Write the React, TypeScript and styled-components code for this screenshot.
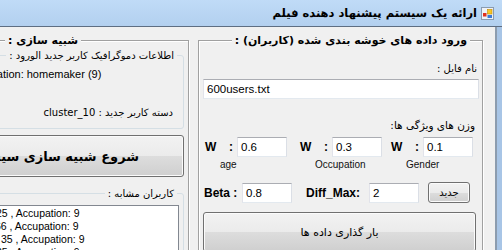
import React, { FC } from 'react';
import styled, { createGlobalStyle } from 'styled-components';

const fa = `"DejaVu Sans", "Liberation Sans", sans-serif`;

const GlobalStyle = createGlobalStyle`
	html, body { margin: 0; padding: 0; background: #f0f0f0; overflow: hidden; }
	body { font-family: "Liberation Sans", Arial, sans-serif; color: #000; }
`;

const Window = styled.div`
	width: 502px;
	height: 250px;
	overflow: hidden;
	display: flex;
	flex-direction: column;
	background: #f0f0f0;
`;

const TitleBar = styled.div`
	flex: 0 0 26px;
	display: flex;
	align-items: center;
	direction: rtl;
	gap: 4px;
	padding-right: 8px;
	background: linear-gradient(#c0dbf7, #b3d0ef);
	border-bottom: 1px solid #5e6e82;
`;

const Title = styled.span`
	font-family: ${fa};
	font-size: 11.5px;
	font-weight: bold;
`;

const Body = styled.div`
	flex: 1;
	display: flex;
	direction: rtl;
	min-height: 0;
`;

const FrameEdge = styled.div`
	flex: 0 0 7px;
	box-sizing: border-box;
	background: #a8c5e6;
	border-left: 2px solid #8c9cae;
`;

const Client = styled.div`
	flex: 1;
	display: flex;
	direction: rtl;
	align-items: flex-start;
	gap: 9px;
	padding: 13px 12px 0 0;
	overflow: hidden;
`;

const Group = styled.div<{ $w: number }>`
	position: relative;
	flex: 0 0 ${p => p.$w}px;
	height: 240px;
	box-sizing: border-box;
	border: 1px solid #a0a0a0;
	box-shadow: inset 1px 1px 0 #fff, 1px 1px 0 #fff;
	display: flex;
	flex-direction: column;
`;

const Legend = styled.span<{ $right: number; $bold?: boolean }>`
	position: absolute;
	top: -7px;
	right: ${p => p.$right}px;
	padding: 0 3px;
	background: #f0f0f0;
	font-family: ${fa};
	font-size: ${p => (p.$bold ? 11 : 10)}px;
	font-weight: ${p => (p.$bold ? 'bold' : 'normal')};
	line-height: 13px;
	white-space: nowrap;
	direction: rtl;
`;

const SubGroup = styled.div<{ $top: number; $h?: number }>`
	position: relative;
	margin: ${p => p.$top}px 4px 0 4px;
	${p => (p.$h ? `height: ${p.$h}px;` : 'flex: 1;')}
	border: 1px solid #d5dfe5;
	border-radius: 3px;
	display: flex;
	flex-direction: column;
`;

const FaLabel = styled.div<{ $top: number; $pr: number; $size?: number }>`
	margin-top: ${p => p.$top}px;
	padding-right: ${p => p.$pr}px;
	font-family: ${fa};
	font-size: ${p => p.$size ?? 10}px;
	line-height: 13px;
	direction: rtl;
	text-align: right;
	white-space: nowrap;
`;

const InfoLine = styled.div`
	margin-top: 12px;
	direction: ltr;
	text-align: left;
	font-size: 11px;
	line-height: 13px;
	white-space: nowrap;
`;

const TextBox = styled.div<{ $w?: number }>`
	box-sizing: border-box;
	height: 20px;
	${p => (p.$w ? `width: ${p.$w}px;` : '')}
	background: #fff;
	border: 1px solid;
	border-color: #abadb3 #dbdfe6 #e3e9ef #e2e3ea;
	padding: 0 3px;
	font-size: 11.5px;
	line-height: 18px;
	direction: ltr;
	text-align: left;
	white-space: nowrap;
`;

const FileBox = styled(TextBox)`
	margin: 4px 3px 0 4px;
`;

const WinButton = styled.div`
	box-sizing: border-box;
	display: flex;
	align-items: center;
	justify-content: center;
	border: 1px solid #707070;
	border-radius: 3px;
	background: linear-gradient(#f2f2f2 0%, #ebebeb 50%, #dddddd 50%, #cfcfcf 100%);
	box-shadow: inset 0 0 0 1px #fbfbfb;
	font-family: ${fa};
	direction: rtl;
	white-space: nowrap;
`;

/* the button runs off the left edge of the window, so its caption is cut */
const StartButton = styled(WinButton)`
	margin: 6px 4px 0 4px;
	height: 42px;
	justify-content: flex-start;
	padding-right: 44px;
	font-size: 13px;
	font-weight: bold;
	overflow: hidden;
`;

const LoadButton = styled(WinButton)`
	margin: 9px 6px 0 4px;
	height: 40px;
	font-size: 11px;
	letter-spacing: 1px;
`;

const NewButton = styled(WinButton)`
	margin-left: 9px;
	width: 42px;
	height: 21px;
	font-size: 10px;
`;

const WeightRow = styled.div`
	margin-top: 5px;
	padding-left: 6px;
	display: grid;
	grid-template-columns: 95px 91px 91px;
	direction: ltr;
`;

const WeightField = styled.div`
	display: grid;
	grid-template-columns: 24px 8px 50px;
	grid-template-rows: 20px 13px;
	align-items: center;
`;

const Bold = styled.span`
	font-size: 12px;
	font-weight: bold;
	white-space: nowrap;
`;

const Caption = styled.span`
	grid-column: 1 / -1;
	padding: 2px 0 0 15px;
	font-size: 10px;
	line-height: 11px;
	color: #111;
`;

const BetaRow = styled.div`
	margin-top: 12px;
	padding-left: 5px;
	display: grid;
	grid-template-columns: 38px 50px 77px 50px 51px;
	align-items: center;
	direction: ltr;
`;

const DiffLabel = styled(Bold)`
	padding-left: 14px;
`;

const ListBox = styled.div`
	flex: 1;
	margin: 11px 4px 0 4px;
	background: #fff;
	border: 1px solid #828790;
	padding-top: 1px;
	direction: ltr;
	overflow: hidden;
`;

const ListLine = styled.div<{ $indent: number }>`
	padding-left: ${p => p.$indent}px;
	font-size: 10.5px;
	line-height: 13px;
	white-space: nowrap;
`;

const AppIcon: FC = () => (
	<svg width="13" height="13" viewBox="0 0 13 13">
		<rect x="0.5" y="0.5" width="12" height="12" fill="#eef2f7" stroke="#8a9bb0" />
		<rect x="6.5" y="2.5" width="4.5" height="4.5" fill="#f7c625" stroke="#c48a00" strokeWidth="0.6" />
		<rect x="2" y="6" width="3.5" height="3.5" fill="#e0321e" />
		<rect x="6.5" y="8" width="4.5" height="3" fill="#3b7bd6" />
	</svg>
);

const similar = [
	{ text: '25 , Accupation: 9', indent: 26 },
	{ text: '66 , Accupation: 9', indent: 25 },
	{ text: '35 , Accupation: 9', indent: 31 },
	{ text: '25 , Accupation: 9', indent: 26 },
];

const weights = [
	{ value: '0.6', caption: 'age' },
	{ value: '0.3', caption: 'Occupation' },
	{ value: '0.1', caption: 'Gender' },
];

const App: FC = () => (
	<Window>
		<GlobalStyle />
		<TitleBar>
			<AppIcon />
			<Title>ارائه یک سیستم پیشنهاد دهنده فیلم</Title>
		</TitleBar>
		<Body>
			<FrameEdge />
			<Client>
				<Group $w={281}>
					<Legend $right={12} $bold>ورود داده های خوشه بندی شده (کاربران) :</Legend>
					<FaLabel $top={21} $pr={5}>نام فایل :</FaLabel>
					<FileBox>600users.txt</FileBox>
					<FaLabel $top={20} $pr={7} $size={10.5}>وزن های ویژگی ها:</FaLabel>
					<WeightRow>
						{weights.map(w => (
							<WeightField key={w.caption}>
								<Bold>W</Bold>
								<Bold>:</Bold>
								<TextBox $w={50}>{w.value}</TextBox>
								<Caption>{w.caption}</Caption>
							</WeightField>
						))}
					</WeightRow>
					<BetaRow>
						<Bold>Beta :</Bold>
						<TextBox $w={50}>0.8</TextBox>
						<DiffLabel>Diff_Max:</DiffLabel>
						<TextBox $w={50}>2</TextBox>
						<NewButton>جدید</NewButton>
					</BetaRow>
					<LoadButton>بار گذاری داده ها</LoadButton>
				</Group>
				<Group $w={230}>
					<Legend $right={107} $bold>شبیه سازی :</Legend>
					<SubGroup $top={14} $h={72}>
						<Legend $right={6}>اطلاعات دموگرافیک کاربر جدید الورود :</Legend>
						<InfoLine>Occupation: homemaker (9)</InfoLine>
						<FaLabel $top={25} $pr={10}>دسته کاربر جدید : cluster_10</FaLabel>
					</SubGroup>
					<StartButton>شروع شبیه سازی سیستم</StartButton>
					<SubGroup $top={16}>
						<Legend $right={6}>کاربران مشابه :</Legend>
						<ListBox>
							{similar.map((s, i) => (
								<ListLine key={i} $indent={s.indent}>{s.text}</ListLine>
							))}
						</ListBox>
					</SubGroup>
				</Group>
			</Client>
		</Body>
	</Window>
);

export default App;
